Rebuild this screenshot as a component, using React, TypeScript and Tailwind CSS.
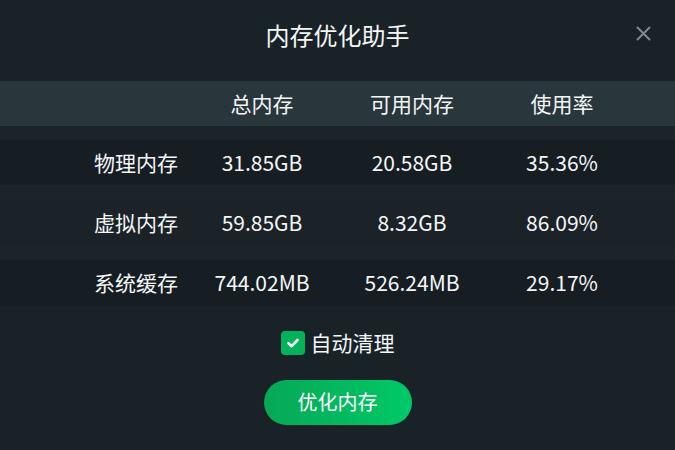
import React from "react";

const rows = [
  ["物理内存", "31.85GB", "20.58GB", "35.36%"],
  ["虚拟内存", "59.85GB", "8.32GB", "86.09%"],
  ["系统缓存", "744.02MB", "526.24MB", "29.17%"],
];

function Row({ cells, className }: { cells: string[]; className: string }) {
  return (
    <div className={`flex h-[45px] items-center pl-[85px] text-[21px] text-[#f4f6f7] ${className}`}>
      <div className="w-[102px] text-center">{cells[0]}</div>
      <div className="w-[150px] text-center">{cells[1]}</div>
      <div className="w-[150px] text-center">{cells[2]}</div>
      <div className="w-[150px] text-center">{cells[3]}</div>
    </div>
  );
}

export default function App() {
  return (
    <div
      className="flex h-[450px] w-[675px] flex-col bg-[#192227] text-white"
      style={{ fontFamily: '"Noto Sans CJK SC", "Noto Sans", sans-serif' }}
    >
      <div className="relative flex h-[70px] items-center justify-center">
        <div className="text-[24px] text-[#f4f6f7]">内存优化助手</div>
        <svg
          className="absolute left-[636px] top-[26px]"
          width="15"
          height="15"
          viewBox="0 0 15 15"
          fill="none"
          stroke="#7f898e"
          strokeWidth="2"
          strokeLinecap="round"
        >
          <path d="M1.5 1.5L13.5 13.5M13.5 1.5L1.5 13.5" />
        </svg>
      </div>
      <div className="mt-[11px]">
        <Row cells={["", "总内存", "可用内存", "使用率"]} className="bg-[#29363c]" />
        <div className="flex flex-col gap-[15px] bg-[#1b242a] pt-[14px]">
          <Row cells={rows[0]} className="bg-[#161e24]" />
          <Row cells={rows[1]} className="bg-[#1b2329]" />
          <Row cells={rows[2]} className="bg-[#161e24]" />
        </div>
      </div>
      <div className="mt-[22px] flex items-center justify-center gap-[6px]">
        <div className="flex h-[24px] w-[24px] items-center justify-center rounded-[4px] bg-[#05b25c]">
          <svg width="16" height="16" viewBox="0 0 16 16" fill="none" stroke="white" strokeWidth="2.6" strokeLinecap="round" strokeLinejoin="round">
            <path d="M3.5 8.2L6.7 11.2L12.5 5" />
          </svg>
        </div>
        <div className="text-[21px] text-[#f4f6f7]">自动清理</div>
      </div>
      <div className="mt-[21px] flex justify-center">
        <button className="flex h-[45px] w-[148px] items-center justify-center rounded-full bg-gradient-to-r from-[#06a855] to-[#00c968] text-[20px] text-white">
          优化内存
        </button>
      </div>
    </div>
  );
}
